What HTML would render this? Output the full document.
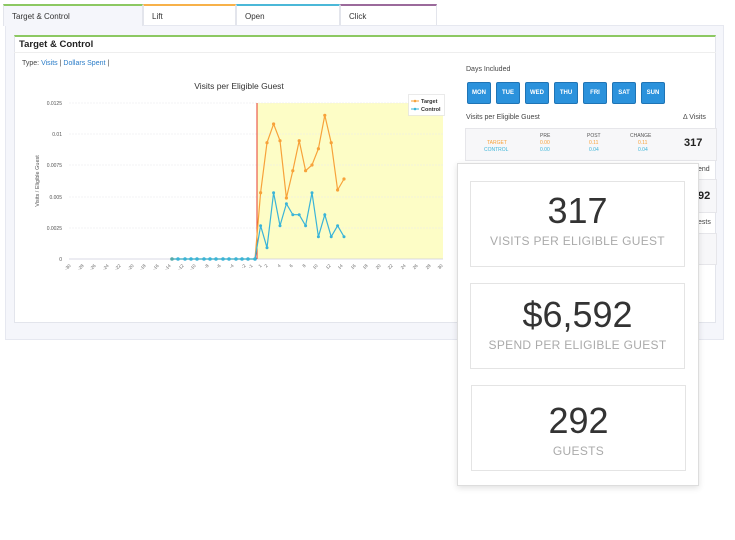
<!DOCTYPE html>
<html><head><meta charset="utf-8"><style>
*{box-sizing:border-box;margin:0;padding:0}
body{width:735px;height:540px;background:#fff;font-family:"Liberation Sans",sans-serif;position:relative;overflow:hidden;color:#333}
.abs{position:absolute}
.tab{position:absolute;top:4px;height:21px;background:#fff;border:1px solid #e3e5ec;border-bottom:none;font-size:8px;padding:6px 0 0 8px;color:#333}
.day{position:absolute;top:82px;width:24px;height:22px;background:#2b92dc;border:1px solid #1f74b5;border-radius:2px;color:#fff;font-size:6px;font-weight:bold;text-align:center;line-height:20px}
.card{position:absolute;left:470px;width:215px;border:1px solid #e4e4e4;background:#fff;text-align:center}
.big{font-size:36px;color:#333;font-weight:300;line-height:40px}
.lbl{font-size:12px;color:#aaa;letter-spacing:.3px;line-height:14px;margin-top:3px}
</style></head><body>
<div class="abs" style="left:5px;top:25px;width:719px;height:315px;background:#f5f6fb;border:1px solid #e6e8f0"></div>
<div class="tab" style="left:3px;width:140px;border-top:2px solid #8cc862;background:#f5f6fb;height:22px">Target &amp; Control</div>
<div class="tab" style="left:143px;width:93px;border-top:2px solid #f7b14a">Lift</div>
<div class="tab" style="left:236px;width:104px;border-top:2px solid #4bb8d8">Open</div>
<div class="tab" style="left:340px;width:97px;border-top:2px solid #9b6a9b">Click</div>
<div class="abs" style="left:14px;top:35px;width:702px;height:288px;background:#fff;border:1px solid #e3e5ec;border-top:2px solid #8cc862"></div>
<div class="abs" style="left:14px;top:37px;width:702px;height:16px;border-bottom:1px solid #eee;font-size:9.5px;font-weight:bold;padding:2px 0 0 5px;color:#222">Target &amp; Control</div>
<div class="abs" style="left:22px;top:60px;font-size:7px;color:#444">Type: <span style="color:#2a7cc8">Visits</span> | <span style="color:#2a7cc8">Dollars Spent</span> |</div>

<svg class="abs" style="left:0;top:0" width="460" height="300">
<text x="239" y="89" font-size="8.5" text-anchor="middle" fill="#333" font-family="Liberation Sans">Visits per Eligible Guest</text>
<rect x="257" y="103" width="186" height="156" fill="#fdfdc6"/>
<g stroke="#e8e8ee" stroke-width="0.6" stroke-dasharray="2,1">
<line x1="69" y1="103" x2="443" y2="103"/><line x1="69" y1="134" x2="443" y2="134"/><line x1="69" y1="165" x2="443" y2="165"/><line x1="69" y1="197" x2="443" y2="197"/><line x1="69" y1="228" x2="443" y2="228"/></g>
<line x1="69" y1="259" x2="443" y2="259" stroke="#ccd" stroke-width="0.7"/>
<g font-size="5" fill="#555" text-anchor="end" font-family="Liberation Sans">
<text x="62" y="105">0.0125</text><text x="62" y="136">0.01</text><text x="62" y="167">0.0075</text><text x="62" y="199">0.005</text><text x="62" y="230">0.0025</text><text x="62" y="261">0</text></g>
<text transform="translate(39,181) rotate(-90)" font-size="5.5" fill="#555" text-anchor="middle" font-family="Liberation Sans">Visits / Eligible Guest</text>
<g font-size="4.5" fill="#666" text-anchor="end" font-family="Liberation Sans">
<text transform="translate(71,266) rotate(-45)">-30</text><text transform="translate(84,266) rotate(-45)">-28</text><text transform="translate(96,266) rotate(-45)">-26</text><text transform="translate(109,266) rotate(-45)">-24</text><text transform="translate(121,266) rotate(-45)">-22</text><text transform="translate(134,266) rotate(-45)">-20</text><text transform="translate(146,266) rotate(-45)">-18</text><text transform="translate(159,266) rotate(-45)">-16</text><text transform="translate(171,266) rotate(-45)">-14</text><text transform="translate(184,266) rotate(-45)">-12</text><text transform="translate(196,266) rotate(-45)">-10</text><text transform="translate(209,266) rotate(-45)">-8</text><text transform="translate(221,266) rotate(-45)">-6</text><text transform="translate(234,266) rotate(-45)">-4</text><text transform="translate(246,266) rotate(-45)">-2</text><text transform="translate(253,266) rotate(-45)">-1</text><text transform="translate(262,266) rotate(-45)">1</text><text transform="translate(268,266) rotate(-45)">2</text><text transform="translate(281,266) rotate(-45)">4</text><text transform="translate(293,266) rotate(-45)">6</text><text transform="translate(306,266) rotate(-45)">8</text><text transform="translate(318,266) rotate(-45)">10</text><text transform="translate(331,266) rotate(-45)">12</text><text transform="translate(343,266) rotate(-45)">14</text><text transform="translate(356,266) rotate(-45)">16</text><text transform="translate(368,266) rotate(-45)">18</text><text transform="translate(381,266) rotate(-45)">20</text><text transform="translate(393,266) rotate(-45)">22</text><text transform="translate(406,266) rotate(-45)">24</text><text transform="translate(418,266) rotate(-45)">26</text><text transform="translate(431,266) rotate(-45)">28</text><text transform="translate(443,266) rotate(-45)">30</text></g>
<line x1="257" y1="103" x2="257" y2="259" stroke="#e53b2c" stroke-width="1"/>
<polyline fill="none" stroke="#f7a23a" stroke-width="1.2" points="172,259 178,259 185,259 191,259 197,259 204,259 210,259 216,259 223,259 229,259 236,259 242,259 248,259 255,259 260.6,192.7 267,142.7 273.6,124 280,140.7 286.4,198 292.8,170.7 299.2,140.7 305.6,170.7 312,165 318.4,148.7 324.8,115.3 331.2,142.7 337.6,190 344,179"/>
<g fill="#f7a23a"><circle cx="260.6" cy="192.7" r="1.6"/><circle cx="267" cy="142.7" r="1.6"/><circle cx="273.6" cy="124" r="1.6"/><circle cx="280" cy="140.7" r="1.6"/><circle cx="286.4" cy="198" r="1.6"/><circle cx="292.8" cy="170.7" r="1.6"/><circle cx="299.2" cy="140.7" r="1.6"/><circle cx="305.6" cy="170.7" r="1.6"/><circle cx="312" cy="165" r="1.6"/><circle cx="318.4" cy="148.7" r="1.6"/><circle cx="324.8" cy="115.3" r="1.6"/><circle cx="331.2" cy="142.7" r="1.6"/><circle cx="337.6" cy="190" r="1.6"/><circle cx="344" cy="179" r="1.6"/></g>
<polyline fill="none" stroke="#3ab4d8" stroke-width="1.2" points="172,259 178,259 185,259 191,259 197,259 204,259 210,259 216,259 223,259 229,259 236,259 242,259 248,259 255,259 260.6,225.7 267,247.7 273.6,192.7 280,225.7 286.4,203.7 292.8,214.7 299.2,214.7 305.6,225.7 312,192.7 318.4,236.7 324.8,214.7 331.2,236.7 337.6,225.7 344,236.7"/>
<g fill="#3ab4d8"><circle cx="172" cy="259" r="1.8" fill="#5aa"/><circle cx="178" cy="259" r="1.8"/><circle cx="185" cy="259" r="1.8"/><circle cx="191" cy="259" r="1.8"/><circle cx="197" cy="259" r="1.8"/><circle cx="204" cy="259" r="1.8"/><circle cx="210" cy="259" r="1.8"/><circle cx="216" cy="259" r="1.8"/><circle cx="223" cy="259" r="1.8"/><circle cx="229" cy="259" r="1.8"/><circle cx="236" cy="259" r="1.8"/><circle cx="242" cy="259" r="1.8"/><circle cx="248" cy="259" r="1.8"/><circle cx="255" cy="259" r="1.8"/><circle cx="260.6" cy="225.7" r="1.5"/><circle cx="267" cy="247.7" r="1.5"/><circle cx="273.6" cy="192.7" r="1.5"/><circle cx="280" cy="225.7" r="1.5"/><circle cx="286.4" cy="203.7" r="1.5"/><circle cx="292.8" cy="214.7" r="1.5"/><circle cx="299.2" cy="214.7" r="1.5"/><circle cx="305.6" cy="225.7" r="1.5"/><circle cx="312" cy="192.7" r="1.5"/><circle cx="318.4" cy="236.7" r="1.5"/><circle cx="324.8" cy="214.7" r="1.5"/><circle cx="331.2" cy="236.7" r="1.5"/><circle cx="337.6" cy="225.7" r="1.5"/><circle cx="344" cy="236.7" r="1.5"/></g>
<rect x="408.5" y="94.5" width="36" height="21" fill="#fff" stroke="#ddd" stroke-width="0.6"/>
<line x1="411" y1="101" x2="419" y2="101" stroke="#f7a23a" stroke-width="1"/><circle cx="415" cy="101" r="1.3" fill="#f7a23a"/>
<line x1="411" y1="109" x2="419" y2="109" stroke="#3ab4d8" stroke-width="1"/><circle cx="415" cy="109" r="1.3" fill="#3ab4d8"/>
<text x="421" y="103" font-size="5.5" font-weight="bold" fill="#333" font-family="Liberation Sans">Target</text>
<text x="421" y="111" font-size="5.5" font-weight="bold" fill="#333" font-family="Liberation Sans">Control</text>
</svg>

<div class="abs" style="left:466px;top:66px;font-size:7px;color:#444">Days Included</div>
<div class="day" style="left:467px">MON</div><div class="day" style="left:496px">TUE</div><div class="day" style="left:525px">WED</div><div class="day" style="left:554px">THU</div><div class="day" style="left:583px">FRI</div><div class="day" style="left:612px">SAT</div><div class="day" style="left:641px">SUN</div>
<div class="abs" style="left:466px;top:114px;font-size:7px;color:#444">Visits per Eligible Guest</div>
<div class="abs" style="left:683px;top:114px;font-size:7px;color:#444">&#916; Visits</div>
<div class="abs" style="left:465px;top:128px;width:252px;height:33px;background:#f7f7f9;border:1px solid #e6e6ea"></div>
<div class="abs" style="font-size:5px;color:#555;left:540px;top:133px">PRE</div>
<div class="abs" style="font-size:5px;color:#555;left:587px;top:133px">POST</div>
<div class="abs" style="font-size:5px;color:#555;left:630px;top:133px">CHANGE</div>
<div class="abs" style="font-size:5px;color:#f7a23a;left:487px;top:140px">TARGET</div>
<div class="abs" style="font-size:5px;color:#3ab4d8;left:484px;top:147px">CONTROL</div>
<div class="abs" style="font-size:5px;color:#f7a23a;left:540px;top:140px">0.00</div>
<div class="abs" style="font-size:5px;color:#3ab4d8;left:540px;top:147px">0.00</div>
<div class="abs" style="font-size:5px;color:#f7a23a;left:589px;top:140px">0.11</div>
<div class="abs" style="font-size:5px;color:#3ab4d8;left:589px;top:147px">0.04</div>
<div class="abs" style="font-size:5px;color:#f7a23a;left:638px;top:140px">0.11</div>
<div class="abs" style="font-size:5px;color:#3ab4d8;left:638px;top:147px">0.04</div>
<div class="abs" style="left:684px;top:137px;font-size:11px;font-weight:bold;color:#222">317</div>
<div class="abs" style="left:698px;top:166px;font-size:7px;color:#444">end</div>
<div class="abs" style="left:690px;top:179px;width:27px;height:34px;background:#f7f7f9;border:1px solid #e6e6ea;font-size:11px;font-weight:bold;padding:10px 0 0 7px;color:#222">92</div>
<div class="abs" style="left:698px;top:219px;font-size:7px;color:#444">ests</div>
<div class="abs" style="left:690px;top:233px;width:27px;height:32px;background:#f7f7f9;border:1px solid #e6e6ea"></div>

<div class="abs" style="left:457px;top:163px;width:242px;height:323px;background:#fff;border:1px solid #ddd;box-shadow:0 2px 6px rgba(0,0,0,.12)"></div>
<div class="card" style="top:181px;height:86px;padding-top:9px"><div class="big">317</div><div class="lbl">VISITS PER ELIGIBLE GUEST</div></div>
<div class="card" style="top:283px;height:86px;padding-top:11px"><div class="big">$6,592</div><div class="lbl">SPEND PER ELIGIBLE GUEST</div></div>
<div class="card" style="top:385px;height:86px;padding-top:15px;left:471px"><div class="big">292</div><div class="lbl">GUESTS</div></div>
</body></html>
